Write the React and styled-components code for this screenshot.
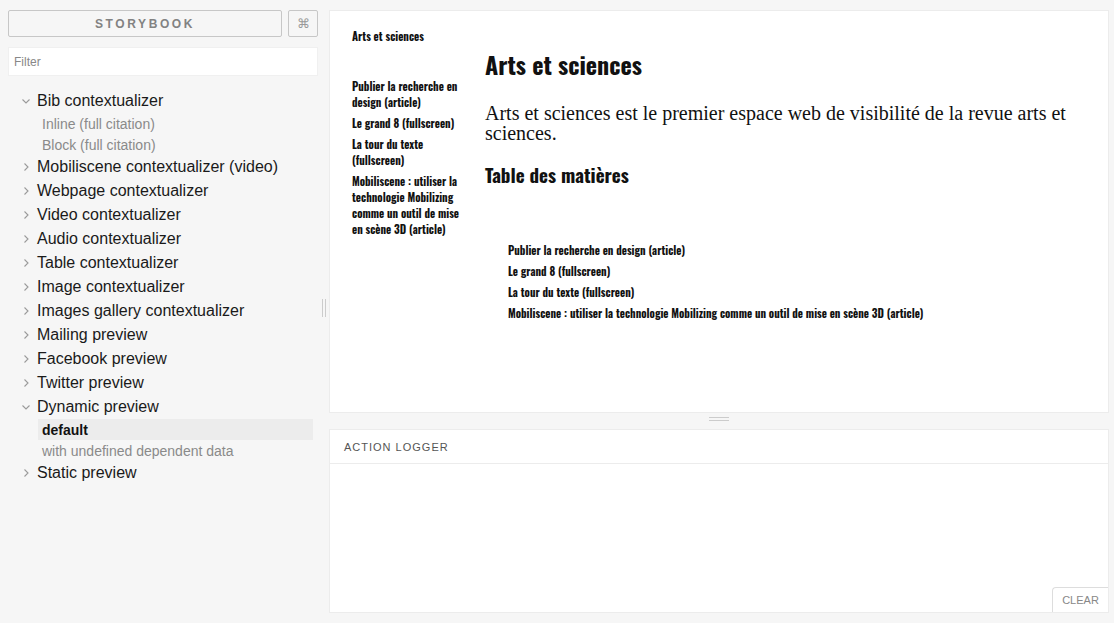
import React from 'react';
import styled, { createGlobalStyle } from 'styled-components';

const GlobalStyle = createGlobalStyle`
  html, body {
    margin: 0;
    padding: 0;
    background: #f6f6f6;
    font-family: "Liberation Sans", Arial, sans-serif;
  }
`;

const Layout = styled.div`
  display: flex;
  width: 1114px;
  height: 623px;
  overflow: hidden;
`;

const Sidebar = styled.div`
  width: 310px;
  padding: 10px 0 0 8px;
  box-sizing: content-box;
  display: flex;
  flex-direction: column;
`;

const HeaderRow = styled.div`
  display: flex;
  gap: 6px;
  height: 27px;
`;

const BrandButton = styled.div`
  flex: 1;
  border: 1px solid #c7c7c7;
  border-radius: 2px;
  display: flex;
  align-items: center;
  justify-content: center;
  font-size: 12px;
  font-weight: bold;
  letter-spacing: 2.6px;
  color: #828282;
`;

const ShortcutButton = styled(BrandButton)`
  flex: none;
  width: 28px;
  letter-spacing: 0;
  font-weight: normal;
  font-size: 13px;
  color: #999;
`;

const FilterInput = styled.div`
  margin-top: 10px;
  height: 27px;
  background: #fff;
  border: 1px solid #f0f0f0;
  display: flex;
  align-items: center;
  padding-left: 5px;
  font-size: 12px;
  color: #888;
`;

const Tree = styled.ul`
  list-style: none;
  margin: 13px 0 0;
  padding: 0 5px 0 12px;
`;

const Kind = styled.li`
  display: flex;
  align-items: center;
  height: 24px;
  font-size: 16px;
  color: #1a1a1a;
`;

const Chevron = styled.svg`
  width: 12px;
  height: 12px;
  margin-right: 5px;
  flex: none;
`;

const Story = styled.li`
  height: 21px;
  margin-left: 18px;
  display: flex;
  align-items: center;
  padding-left: 4px;
  font-size: 14px;
  color: ${p => (p.$active ? '#111' : '#8a8a8a')};
  font-weight: ${p => (p.$active ? 'bold' : 'normal')};
  background: ${p => (p.$active ? '#ececec' : 'transparent')};
`;

const VHandle = styled.div`
  width: 11px;
  display: flex;
  align-items: center;
  justify-content: center;
  &::after {
    content: '';
    width: 2px;
    height: 18px;
    margin-top: -8px;
    border-left: 1px solid #ccc;
    border-right: 1px solid #ccc;
  }
`;

const Main = styled.div`
  flex: 1;
  display: flex;
  flex-direction: column;
  padding: 10px 5px 10px 0;
`;

const Preview = styled.div`
  height: 403px;
  background: #fff;
  border: 1px solid #ececec;
  display: flex;
  padding: 18px 22px 0 22px;
  box-sizing: border-box;
`;

const HHandle = styled.div`
  height: 16px;
  display: flex;
  align-items: center;
  justify-content: center;
  &::after {
    content: '';
    width: 20px;
    height: 2px;
    margin-top: -5px;
    border-top: 1px solid #ccc;
    border-bottom: 1px solid #ccc;
  }
`;

const condensed = `"Oswald", "DejaVu Sans Condensed", sans-serif`;

const SideNav = styled.div`
  width: 112px;
  flex: none;
  font-family: ${condensed};
  font-weight: bold;
  font-size: 11px;
  color: #111;
`;

const SiteTitle = styled.div`
  line-height: 14px;
  margin-bottom: 35px;
`;

const NavLink = styled.div`
  line-height: 16px;
  margin-bottom: 5px;
`;

const Article = styled.div`
  flex: 1;
  margin-left: 21px;
  padding-top: 20px;
`;

const Title = styled.h1`
  margin: 0;
  font-family: ${condensed};
  font-weight: bold;
  font-size: 24px;
  line-height: 30px;
  color: #111;
`;

const Lead = styled.p`
  margin: 24px 0 0;
  font-family: "Liberation Serif", "Times New Roman", serif;
  font-size: 20px;
  line-height: 20px;
  color: #111;
`;

const SubTitle = styled.h2`
  margin: 19px 0 0;
  font-family: ${condensed};
  font-weight: bold;
  font-size: 19px;
  line-height: 24px;
  color: #111;
`;

const Toc = styled.div`
  margin: 54px 0 0 23px;
  font-family: ${condensed};
  font-weight: bold;
  font-size: 11px;
  color: #111;
`;

const TocItem = styled.div`
  line-height: 21px;
`;

const Logger = styled.div`
  flex: 1;
  background: #fff;
  border: 1px solid #ececec;
  display: flex;
  flex-direction: column;
  position: relative;
`;

const LoggerHeader = styled.div`
  height: 33px;
  border-bottom: 1px solid #ececec;
  display: flex;
  align-items: center;
  padding-left: 14px;
  font-size: 11px;
  letter-spacing: 1px;
  color: #555;
`;

const ClearButton = styled.div`
  position: absolute;
  right: 0;
  bottom: 0;
  width: 55px;
  height: 24px;
  border-top: 1px solid #ddd;
  border-left: 1px solid #ddd;
  border-top-left-radius: 4px;
  display: flex;
  align-items: center;
  justify-content: center;
  font-size: 11px;
  color: #888;
  background: #fff;
`;

const Arrow = ({ open }) => (
  <Chevron viewBox="0 0 12 12">
    <path
      d={open ? 'M2.5 4.5 L6 8 L9.5 4.5' : 'M4.5 2.5 L8 6 L4.5 9.5'}
      fill="none"
      stroke="#9a9a9a"
      strokeWidth="1.1"
    />
  </Chevron>
);

const kinds = [
  { name: 'Bib contextualizer', stories: ['Inline (full citation)', 'Block (full citation)'] },
  { name: 'Mobiliscene contextualizer (video)' },
  { name: 'Webpage contextualizer' },
  { name: 'Video contextualizer' },
  { name: 'Audio contextualizer' },
  { name: 'Table contextualizer' },
  { name: 'Image contextualizer' },
  { name: 'Images gallery contextualizer' },
  { name: 'Mailing preview' },
  { name: 'Facebook preview' },
  { name: 'Twitter preview' },
  { name: 'Dynamic preview', stories: ['default', 'with undefined dependent data'], active: 'default' },
  { name: 'Static preview' },
];

const links = [
  'Publier la recherche en design (article)',
  'Le grand 8 (fullscreen)',
  'La tour du texte (fullscreen)',
  'Mobiliscene : utiliser la technologie Mobilizing comme un outil de mise en scène 3D (article)',
];

const App = () => {
  return (
    <>
      <GlobalStyle />
      <Layout>
        <Sidebar>
          <HeaderRow>
            <BrandButton>STORYBOOK</BrandButton>
            <ShortcutButton>⌘</ShortcutButton>
          </HeaderRow>
          <FilterInput>Filter</FilterInput>
          <Tree>
            {kinds.map(k => (
              <React.Fragment key={k.name}>
                <Kind>
                  <Arrow open={!!k.stories} />
                  {k.name}
                </Kind>
                {k.stories &&
                  k.stories.map(s => (
                    <Story key={s} $active={s === k.active}>
                      {s}
                    </Story>
                  ))}
              </React.Fragment>
            ))}
          </Tree>
        </Sidebar>
        <VHandle />
        <Main>
          <Preview>
            <SideNav>
              <SiteTitle>Arts et sciences</SiteTitle>
              {links.map(l => (
                <NavLink key={l}>{l}</NavLink>
              ))}
            </SideNav>
            <Article>
              <Title>Arts et sciences</Title>
              <Lead>
                Arts et sciences est le premier espace web de visibilité de la revue arts et
                sciences.
              </Lead>
              <SubTitle>Table des matières</SubTitle>
              <Toc>
                {links.map(l => (
                  <TocItem key={l}>{l}</TocItem>
                ))}
              </Toc>
            </Article>
          </Preview>
          <HHandle />
          <Logger>
            <LoggerHeader>ACTION LOGGER</LoggerHeader>
            <ClearButton>CLEAR</ClearButton>
          </Logger>
        </Main>
      </Layout>
    </>
  );
};

export default App;
